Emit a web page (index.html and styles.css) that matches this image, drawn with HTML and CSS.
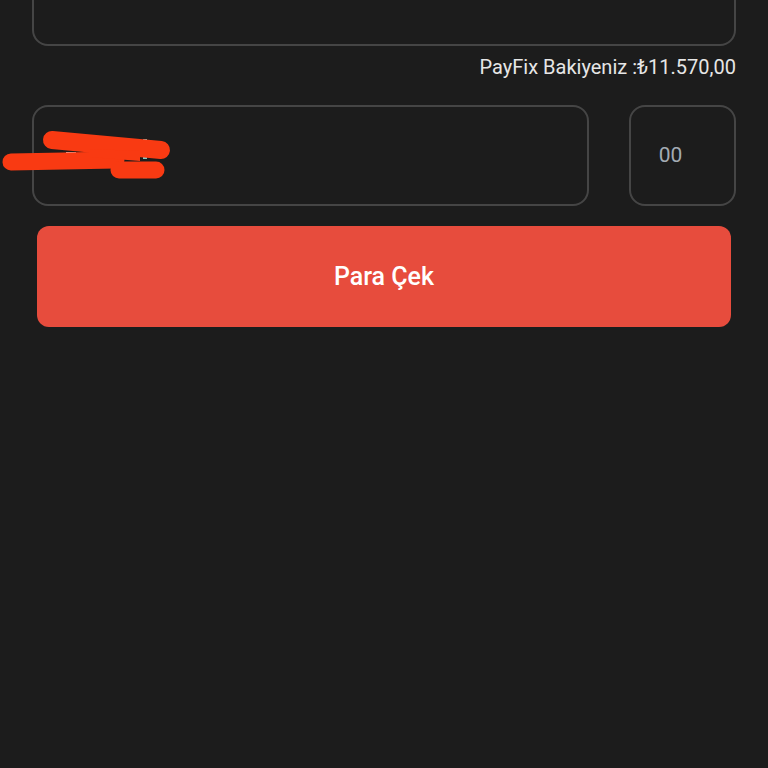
FILE: index.html
```html
<!DOCTYPE html>
<html lang="tr">
<head>
<meta charset="utf-8">
<link rel="stylesheet" href="styles.css">
</head>
<body>
<div class="page">
  <div class="top-box"></div>
  <div class="balance">PayFix Bakiyeniz :₺11.570,00</div>
  <div class="row">
    <div class="field main-field">
      <svg class="scribble" width="180" height="80" viewBox="0 0 180 80">
        <rect x="64" y="47" width="10" height="2" fill="#f2f2f2"/>
        <rect x="141" y="34" width="4" height="20" fill="#7fc9c4"/>
        <g stroke="#f93a12" stroke-linecap="round" stroke-linejoin="round" fill="none">
          <path d="M50 35 L159 45" stroke-width="18"/>
          <path d="M9 57 L114 55" stroke-width="17"/>
          <path d="M117 65 L154 65" stroke-width="17"/>
        </g>
        <polygon points="88,44 138,46 138,56 88,52" fill="#f93a12"/>
      </svg>
    </div>
    <div class="field cents">00</div>
  </div>
  <button class="withdraw">Para Çek</button>
</div>
</body>
</html>
```
FILE: styles.css
```css
html, body {
  margin: 0;
  padding: 0;
  background: #1c1c1c;
  height: 100%;
}
body {
  font-family: Roboto, "Noto Sans", sans-serif;
  overflow: hidden;
}
.page {
  padding: 0 32px;
  display: flex;
  flex-direction: column;
}
.top-box {
  margin-top: -60px;
  height: 102px;
  border: 2px solid #454545;
  border-radius: 16px;
}
.balance {
  text-align: right;
  color: #e6e6e6;
  font-size: 20px;
  margin-top: 10px;
  height: 22px;
  line-height: 22px;
}
.row {
  display: flex;
  gap: 40px;
  margin-top: 27px;
}
.field {
  height: 97px;
  border: 2px solid #454545;
  border-radius: 16px;
  box-sizing: content-box;
}
.main-field {
  flex: 1;
  position: relative;
}
.scribble {
  position: absolute;
  left: -32px;
  top: -2px;
  overflow: visible;
}
.cents {
  display: flex;
  align-items: center;
  justify-content: center;
  color: #a3abb3;
  font-size: 21px;
  padding-right: 24px;
  padding-bottom: 2px;
  box-sizing: border-box;
  width: 107px;
  height: 101px;
}
.withdraw {
  margin: 20px 5px 0;
  height: 101px;
  border: none;
  border-radius: 12px;
  background: #e74c3d;
  color: #ffffff;
  font-family: Roboto, sans-serif;
  font-size: 25px;
  font-weight: 500;
}
```
